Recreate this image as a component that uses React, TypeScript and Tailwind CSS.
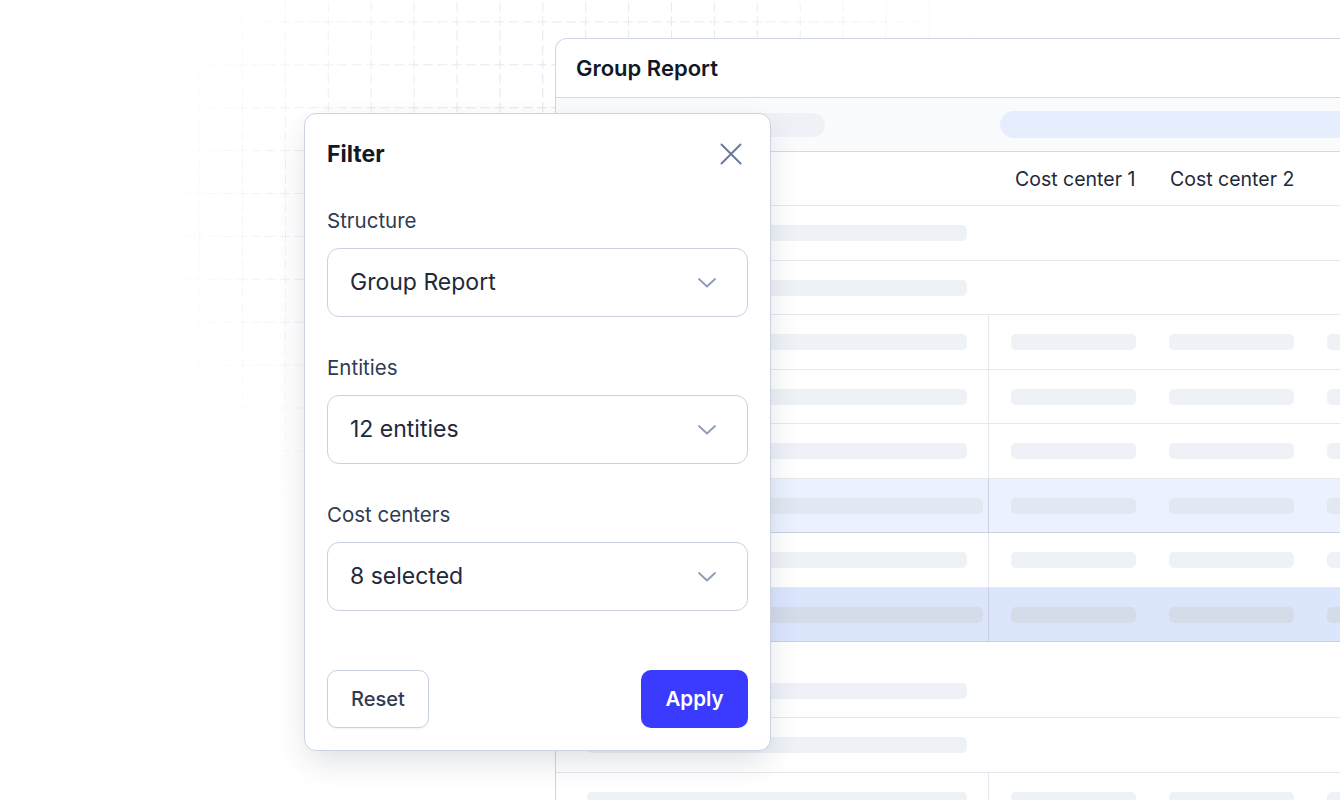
import React from 'react';

type Tone = 'plain' | 'light' | 'strong';

interface RowSpec {
  tall: boolean;
  cols: boolean;
  tone: Tone;
}

const rows: RowSpec[] = [
  { tall: true, cols: false, tone: 'plain' },
  { tall: false, cols: false, tone: 'plain' },
  { tall: true, cols: true, tone: 'plain' },
  { tall: false, cols: true, tone: 'plain' },
  { tall: true, cols: true, tone: 'plain' },
  { tall: false, cols: true, tone: 'light' },
  { tall: true, cols: true, tone: 'plain' },
  { tall: false, cols: true, tone: 'strong' },
];

const lowerRows: RowSpec[] = [
  { tall: false, cols: false, tone: 'plain' },
  { tall: true, cols: false, tone: 'plain' },
  { tall: true, cols: true, tone: 'plain' },
];

const GridBackdrop = () => (
  <svg className="pointer-events-none absolute left-0 top-0" width="1340" height="800">
    <defs>
      <pattern id="grid" x="27.5" y="21.4" width="42.9" height="42.9" patternUnits="userSpaceOnUse">
        <path
          d="M0 0.5H5M9.3 0.5H19.3M23.6 0.5H33.6M37.9 0.5H42.9M0.5 0V5M0.5 9.3V19.3M0.5 23.6V33.6M0.5 37.9V42.9"
          stroke="#d6deeb"
          strokeWidth="1"
          fill="none"
        />
      </pattern>
      <radialGradient
        id="fade"
        cx="0"
        cy="0"
        r="1"
        gradientUnits="userSpaceOnUse"
        gradientTransform="translate(590 210) scale(450 420)"
      >
        <stop offset="0" stopColor="#fff" stopOpacity="1" />
        <stop offset="0.6" stopColor="#fff" stopOpacity="0.55" />
        <stop offset="1" stopColor="#fff" stopOpacity="0" />
      </radialGradient>
      <mask id="fadeMask">
        <rect width="1340" height="800" fill="url(#fade)" />
      </mask>
    </defs>
    <rect width="1340" height="800" fill="url(#grid)" mask="url(#fadeMask)" />
  </svg>
);

const Row = ({ tall, cols, tone }: RowSpec) => {
  const rowClass =
    tone === 'strong'
      ? 'bg-[#dbe6fd] border-[#c8d1e1]'
      : tone === 'light'
        ? 'bg-[#ebf1fe] border-[#c8d1e1]'
        : 'bg-white border-[#e4e9f0]';
  const skel =
    tone === 'strong' ? 'bg-[#d4dcea]' : tone === 'light' ? 'bg-[#e1e8f1]' : 'bg-[#eef2f7]';
  const divider = tone === 'plain' ? 'border-r border-[#e4e9f0]' : 'border-r border-[#c8d1e1]';

  return (
    <div className={`flex border-b ${tall ? 'h-[55px]' : 'h-[54px]'} ${rowClass}`}>
      <div className={`flex w-[433px] shrink-0 items-center pl-[31px] ${cols ? divider : ''}`}>
        <div className={`h-[16px] rounded-[5px] ${tone === 'plain' ? 'w-[380px]' : 'w-[396px]'} ${skel}`} />
      </div>
      {cols &&
        [0, 1, 2].map((i) => (
          <div key={i} className="flex w-[158px] shrink-0 items-center pl-[22px]">
            <div className={`h-[16px] w-[125px] rounded-[5px] ${skel}`} />
          </div>
        ))}
    </div>
  );
};

const ReportCard = () => (
  <div className="w-[900px] rounded-tl-[12px] border-l border-t border-[#cfd6e4] bg-white">
    <div className="flex h-[59px] items-center border-b border-[#d3d9e6] pl-[20px] text-[22px] font-semibold text-[#111827]">
      Group Report
    </div>
    <div className="flex h-[54px] items-center border-b border-[#d3d9e6] bg-[#fafbfd]">
      <div className="ml-[31px] h-[24px] w-[238px] rounded-full bg-[#eef2f7]" />
      <div className="ml-[175px] h-[27px] w-[420px] rounded-full bg-[#e6edfc]" />
    </div>
    <div className="flex h-[54px] items-center border-b border-[#e4e9f0] pt-[2px] text-[19.5px] text-[#1f2937]">
      <div className="w-[433px] shrink-0" />
      <div className="w-[158px] shrink-0 pl-[26px]">Cost center 1</div>
      <div className="w-[158px] shrink-0 pl-[23px]">Cost center 2</div>
    </div>
    {rows.map((r, i) => (
      <Row key={i} {...r} />
    ))}
    <div className="h-[22px]" />
    {lowerRows.map((r, i) => (
      <Row key={i} {...r} />
    ))}
  </div>
);

const Chevron = () => (
  <svg width="18" height="10" viewBox="0 0 18 10" fill="none">
    <path d="M1 1L9 8.5L17 1" stroke="#8e9bb7" strokeWidth="1.8" strokeLinecap="round" strokeLinejoin="round" />
  </svg>
);

const Field = ({ label, value, className = '' }: { label: string; value: string; className?: string }) => (
  <div className={className}>
    <div className="h-[24px] pt-[1px] text-[20.5px] leading-[24px] text-[#2f3b52]">{label}</div>
    <div className="mt-[16px] flex h-[69px] items-center justify-between rounded-[12px] border border-[#c9d1e2] pl-[22px] pr-[31px]">
      <span className="text-[23px] text-[#1e293b]">{value}</span>
      <Chevron />
    </div>
  </div>
);

const FilterPanel = () => (
  <div className="absolute left-[304px] top-[113px] flex h-[638px] w-[467px] flex-col rounded-[12px] border border-[#cad2e3] bg-white px-[22px] pb-[22px] pt-[25px] shadow-[0_12px_32px_-4px_rgba(30,41,70,0.16)]">
    <div className="flex h-[30px] items-center justify-between">
      <h2 className="text-[23px] font-bold text-[#111827]">Filter</h2>
      <svg className="mr-[6px]" width="22" height="22" viewBox="0 0 22 22" fill="none">
        <path d="M1.5 1.5L20.5 20.5M20.5 1.5L1.5 20.5" stroke="#6b7a9c" strokeWidth="2" strokeLinecap="round" />
      </svg>
    </div>
    <Field className="mt-[39px]" label="Structure" value="Group Report" />
    <Field className="mt-[38px]" label="Entities" value="12 entities" />
    <Field className="mt-[38px]" label="Cost centers" value="8 selected" />
    <div className="mt-auto flex items-center justify-between">
      <button className="h-[58px] w-[102px] rounded-[10px] border border-[#c9d1e2] bg-white text-[20px] font-medium text-[#2f3b52] shadow-[0_1px_2px_rgba(15,23,42,0.06)]">
        Reset
      </button>
      <button className="h-[58px] w-[107px] rounded-[10px] bg-[#3b3bff] text-[20.5px] font-semibold text-white">
        Apply
      </button>
    </div>
  </div>
);

const App: React.FC = () => (
  <div className="relative h-[800px] w-[1340px] overflow-hidden bg-white font-['Inter',sans-serif]">
    <GridBackdrop />
    <div className="relative ml-[555px] pt-[38px]">
      <ReportCard />
    </div>
    <FilterPanel />
  </div>
);

export default App;
